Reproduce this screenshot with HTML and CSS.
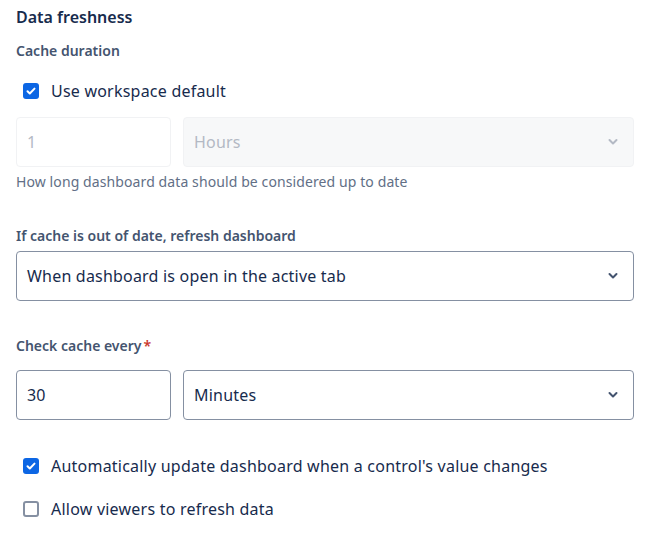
FILE: index.html
```html
<!DOCTYPE html>
<html>
<head>
<meta charset="utf-8">
<link rel="stylesheet" href="styles.css">
</head>
<body>
<div class="panel">
  <h2 class="title">Data freshness</h2>
  <div class="label">Cache duration</div>
  <label class="check check-default">
    <span class="box checked"><svg viewBox="0 0 16 16" width="16" height="16"><path d="M4.5 8.2l2.3 2.3 4.7-4.9" fill="none" stroke="#fff" stroke-width="2" stroke-linecap="round" stroke-linejoin="round"/></svg></span>
    <span class="check-text">Use workspace default</span>
  </label>
  <div class="row row-disabled">
    <div class="field num disabled-num">1</div>
    <div class="field select disabled-select">
      <span>Hours</span>
      <svg class="chev" viewBox="0 0 12 8" width="12" height="8"><path d="M2.5 2l3.5 3.5 3.5-3.5" fill="none" stroke="currentColor" stroke-width="2" stroke-linecap="round" stroke-linejoin="round"/></svg>
    </div>
  </div>
  <div class="help">How long dashboard data should be considered up to date</div>

  <div class="label label-2">If cache is out of date, refresh dashboard</div>
  <div class="field select full">
    <span>When dashboard is open in the active tab</span>
    <svg class="chev" viewBox="0 0 12 8" width="12" height="8"><path d="M2.5 2l3.5 3.5 3.5-3.5" fill="none" stroke="currentColor" stroke-width="2" stroke-linecap="round" stroke-linejoin="round"/></svg>
  </div>

  <div class="label label-3">Check cache every<span class="req">*</span></div>
  <div class="row row-check">
    <div class="field num">30</div>
    <div class="field select">
      <span>Minutes</span>
      <svg class="chev" viewBox="0 0 12 8" width="12" height="8"><path d="M2.5 2l3.5 3.5 3.5-3.5" fill="none" stroke="currentColor" stroke-width="2" stroke-linecap="round" stroke-linejoin="round"/></svg>
    </div>
  </div>

  <label class="check check-auto">
    <span class="box checked"><svg viewBox="0 0 16 16" width="16" height="16"><path d="M4.5 8.2l2.3 2.3 4.7-4.9" fill="none" stroke="#fff" stroke-width="2" stroke-linecap="round" stroke-linejoin="round"/></svg></span>
    <span class="check-text">Automatically update dashboard when a control's value changes</span>
  </label>
  <label class="check check-viewers">
    <span class="box"></span>
    <span class="check-text">Allow viewers to refresh data</span>
  </label>
</div>
</body>
</html>
```
FILE: styles.css
```css
* { box-sizing: border-box; }
html, body { margin: 0; padding: 0; background: #fff; }
body {
  font-family: "Noto Sans", "Open Sans", sans-serif;
  color: #172B4D;
}
.panel {
  width: 662px;
  padding: 6px 28px 0 16px;
}
.title {
  margin: 0;
  font-size: 16px;
  line-height: 22px;
  font-weight: 600;
  color: #172B4D;
}
.label {
  margin-top: 14px;
  font-size: 14px;
  line-height: 18px;
  font-weight: 600;
  color: #44546F;
}
.label-2 { margin-top: 36px; }
.label-3 { margin-top: 36px; }
.req { color: #C9372C; margin-left: 2px; }
.check {
  display: flex;
  align-items: center;
  gap: 12px;
  padding-left: 7px;
  height: 24px;
  font-size: 16px;
  letter-spacing: 0.22px;
  color: #172B4D;
}
.check-default { margin-top: 19px; }
.box {
  width: 16px;
  height: 16px;
  border-radius: 3px;
  border: 2px solid #8590A2;
  flex: none;
  display: flex;
  background: #fff;
}
.box.checked {
  background: #0C66E4;
  border: none;
}
.row {
  display: flex;
  gap: 12px;
}
.row-disabled { margin-top: 14px; }
.row-check { margin-top: 15px; }
.field {
  height: 50px;
  border: 1px solid #8590A2;
  border-radius: 4px;
  font-size: 16px;
  letter-spacing: 0.2px;
  display: flex;
  align-items: center;
  padding: 0 10px;
  color: #172B4D;
}
.num { width: 155px; flex: none; }
.select { flex: 1; justify-content: space-between; padding-right: 14px; }
.chev { color: #44546F; }
.disabled-num {
  border-color: #F1F2F4;
  color: #B3B9C4;
  background: #fff;
}
.disabled-select {
  border-color: #F1F2F4;
  background: #F7F8F9;
  color: #B3B9C4;
}
.disabled-select .chev { color: #B3B9C4; }
.help {
  margin-top: 6px;
  font-size: 14px;
  line-height: 18px;
  letter-spacing: 0.1px;
  color: #626F86;
}
.full { margin-top: 6px; }
.check-auto { margin-top: 34px; }
.check-viewers { margin-top: 19px; }
```
